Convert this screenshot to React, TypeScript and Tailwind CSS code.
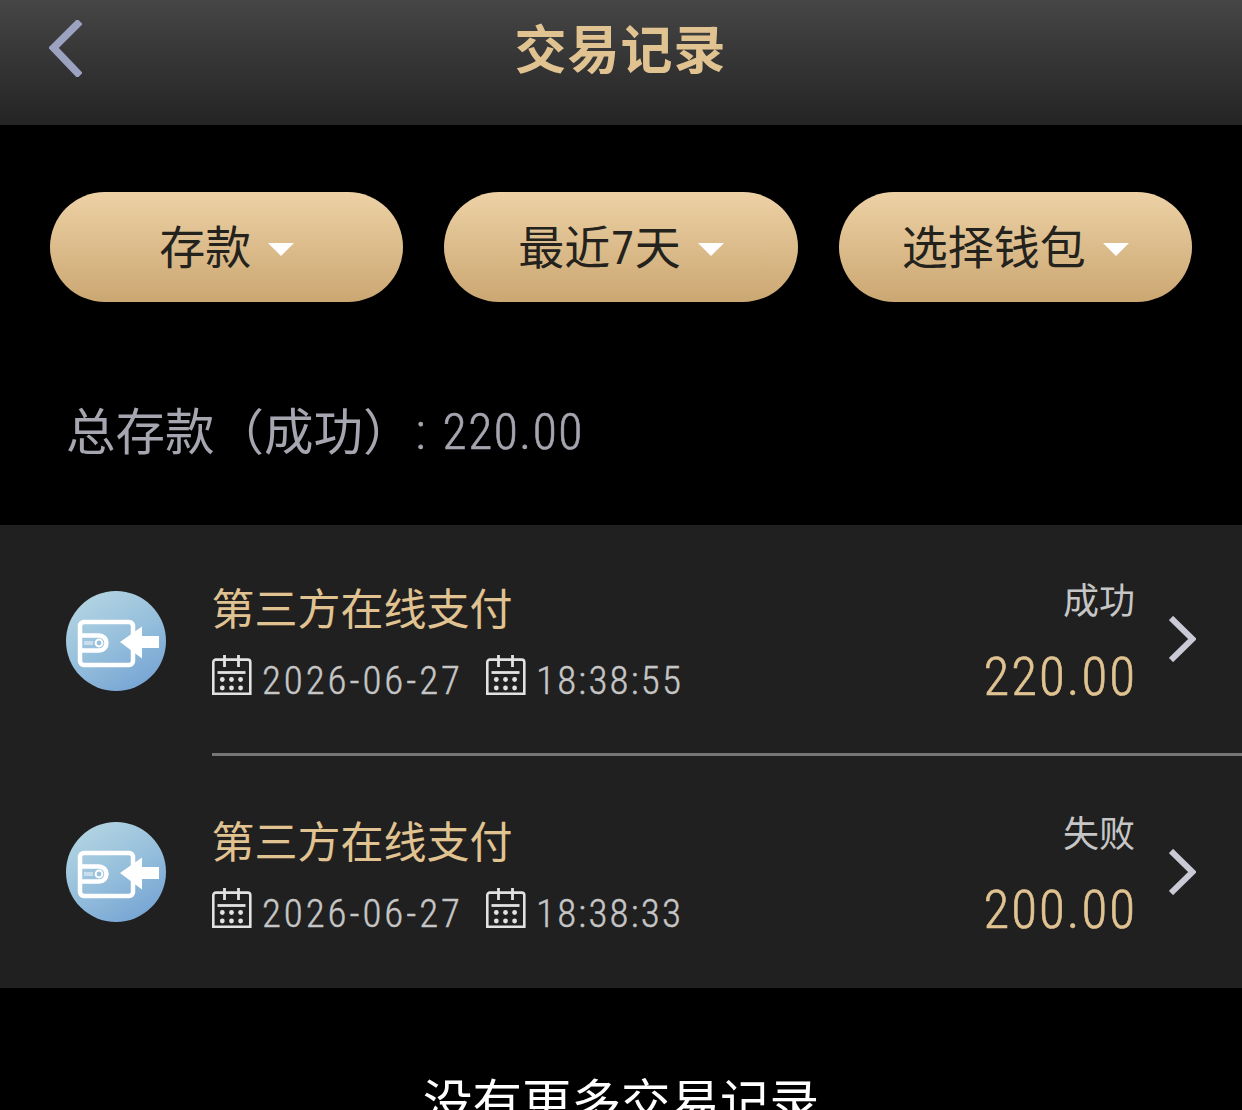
interface TransactionRecord {
  id: number;
  title: string;
  date: string;
  time: string;
  status: string;
  amount: string;
}

const filters = [
  { id: 'type', before: '存款', digit: '', after: '' },
  { id: 'range', before: '最近', digit: '7', after: '天' },
  { id: 'wallet', before: '选择钱包', digit: '', after: '' },
];

const records: TransactionRecord[] = [
  {
    id: 1,
    title: '第三方在线支付',
    date: '2026-06-27',
    time: '18:38:55',
    status: '成功',
    amount: '220.00',
  },
  {
    id: 2,
    title: '第三方在线支付',
    date: '2026-06-27',
    time: '18:38:33',
    status: '失败',
    amount: '200.00',
  },
];

function WalletIcon() {
  return (
    <svg viewBox="0 0 100 100" className="mt-[66px] h-[100px] w-[100px] shrink-0">
      <defs>
        <linearGradient id="walletBg" x1="0.2" y1="0" x2="0.8" y2="1">
          <stop offset="0" stopColor="#b4d6e2" />
          <stop offset="0.5" stopColor="#96bfdc" />
          <stop offset="1" stopColor="#74a3d3" />
        </linearGradient>
      </defs>
      <circle cx="50" cy="50" r="50" fill="url(#walletBg)" />
      <g fill="none" stroke="#fff" strokeWidth="4.5">
        <rect x="14" y="31" width="53" height="43" rx="4" />
        <path d="M14 44.5h19a7.5 7.5 0 0 1 0 15H14" />
        <circle cx="33" cy="52" r="3.4" strokeWidth="2" />
      </g>
      <path d="M18 52h9" stroke="#fff" strokeOpacity="0.45" strokeWidth="4" />
      <path d="M54 51 76 35.5V45h17v12H76v10.5Z" fill="#fff" />
    </svg>
  );
}

function CalendarIcon() {
  return (
    <svg viewBox="0 0 40 40" className="h-10 w-10 shrink-0" fill="none" stroke="#e2e2e2">
      <path d="M1.3 38.7V7.2a2.6 2.6 0 0 1 2.6-2.6h31.8a2.6 2.6 0 0 1 2.6 2.6v31.5Z" strokeWidth="2.6" />
      <path d="M12.5 0v12M26.5 0v12" strokeWidth="2.8" />
      <path d="M5.5 17.5h28" strokeWidth="2.8" />
      <g fill="#e2e2e2" stroke="none">
        <circle cx="10.3" cy="24.5" r="2.4" />
        <circle cx="19.5" cy="24.5" r="2.4" />
        <circle cx="28.6" cy="24.5" r="2.4" />
        <circle cx="10.3" cy="33" r="2.4" />
        <circle cx="19.5" cy="33" r="2.4" />
        <circle cx="28.6" cy="33" r="2.4" />
      </g>
    </svg>
  );
}

function RecordDetails({ record }: { record: TransactionRecord }) {
  return (
    <div className="ml-[46px] flex flex-1 items-start">
      <div className="flex flex-col">
        <div className="-mt-[10px] text-[43px] leading-[50px] -indent-[0.5px] text-[#e0c391]">{record.title}</div>
        <div className="mt-[24px] flex h-10 items-start text-[39px] leading-[40px] font-light whitespace-nowrap text-[#c6c6c6] [font-stretch:85%] [-webkit-text-stroke:0.4px_#c6c6c6]">
          <CalendarIcon />
          <span className="mt-[6px] ml-[10px] w-[224px] font-[Roboto] tracking-[2.9px]">
            {record.date}
          </span>
          <CalendarIcon />
          <span className="mt-[6px] ml-[10px] font-[Roboto] tracking-[2.2px]">{record.time}</span>
        </div>
      </div>
      <div className="-mt-[15px] ml-auto flex flex-col items-end">
        <div className="text-[36px] leading-[44px] text-[#c6c6c6]">{record.status}</div>
        <div className="-mr-[2px] mt-[27px] font-[Roboto] text-[53px] leading-[60px] font-light tracking-[2px] text-[#e0c391] [font-stretch:85%] [-webkit-text-stroke:0.6px_#e0c391]">
          {record.amount}
        </div>
      </div>
      <svg viewBox="0 0 27 46" className="mt-[25px] mr-[46px] ml-[34px] h-[46px] w-[27px]">
        <path d="M2 2 23.5 23 2 44" fill="none" stroke="#cacad6" strokeWidth="6" />
      </svg>
    </div>
  );
}

export default function App() {
  return (
    <div className="flex h-[1110px] w-[1242px] flex-col overflow-hidden bg-black font-['Noto_Sans_CJK_SC',sans-serif]">
      {/* Header */}
      <header className="flex h-[125px] shrink-0 items-center bg-linear-to-b from-[#464646] to-[#242424] pb-[29px] pl-[49px]">
        <svg viewBox="0 0 33 57" className="h-[57px] w-[33px]">
          <path d="M31 1.5 4.5 27.8 31 55.5" fill="none" stroke="#9ba3c1" strokeWidth="7.5" />
        </svg>
        <h1 className="mr-[83px] flex-1 pb-[2px] text-center text-[52px] leading-[60px] font-semibold tracking-[1px] text-[#e0c391]">
          交易记录
        </h1>
      </header>

      {/* Filters */}
      <div className="mt-[67px] flex h-[110px] shrink-0 gap-[41px] px-[50px]">
        {filters.map((filter) => (
          <button
            key={filter.id}
            className="flex flex-1 items-center justify-center gap-[17px] rounded-full bg-linear-to-b from-[#edd1a5] to-[#cba772] text-[46px] text-[#24221d]"
          >
            <span className="-mt-[7px] h-[60px] leading-[60px]">
              {filter.before}
              {filter.digit && (
                <span className="ml-px font-[Roboto] leading-none tracking-[1px] [font-stretch:85%]">{filter.digit}</span>
              )}
              {filter.after}
            </span>
            <svg viewBox="0 0 26 13" className="mt-[5px] h-[13px] w-[26px]">
              <path d="M0 0h26L13 13Z" fill="#fff" />
            </svg>
          </button>
        ))}
      </div>

      {/* Total */}
      <div className="mt-[95px] flex h-[70px] shrink-0 items-center pl-[66px] text-[49.5px] text-[#a5a6b0]">
        <span className="pb-[5px]">总存款（成功）</span>
        <span className="ml-[3px] font-[Roboto] font-light tracking-[1.5px] [word-spacing:3px] whitespace-pre [font-stretch:85%] [-webkit-text-stroke:0.6px_#a5a6b0]">
          : 220.00
        </span>
      </div>

      {/* Records */}
      <div className="mt-[58px] h-[463px] shrink-0 bg-[#202020]">
        <div className="flex h-[228px] pl-[66px]">
          <WalletIcon />
          <div className="flex flex-1 pt-[66px]">
            <RecordDetails record={records[0]} />
          </div>
        </div>
        <div className="ml-[212px] h-[3px] bg-[#767676]" />
        <div className="flex pl-[66px]">
          <WalletIcon />
          <div className="flex flex-1 pt-[68px]">
            <RecordDetails record={records[1]} />
          </div>
        </div>
      </div>

      <div className="mt-[82px] text-center text-[49.5px] leading-[60px] whitespace-nowrap text-white">
        没有更多交易记录
      </div>
    </div>
  );
}
